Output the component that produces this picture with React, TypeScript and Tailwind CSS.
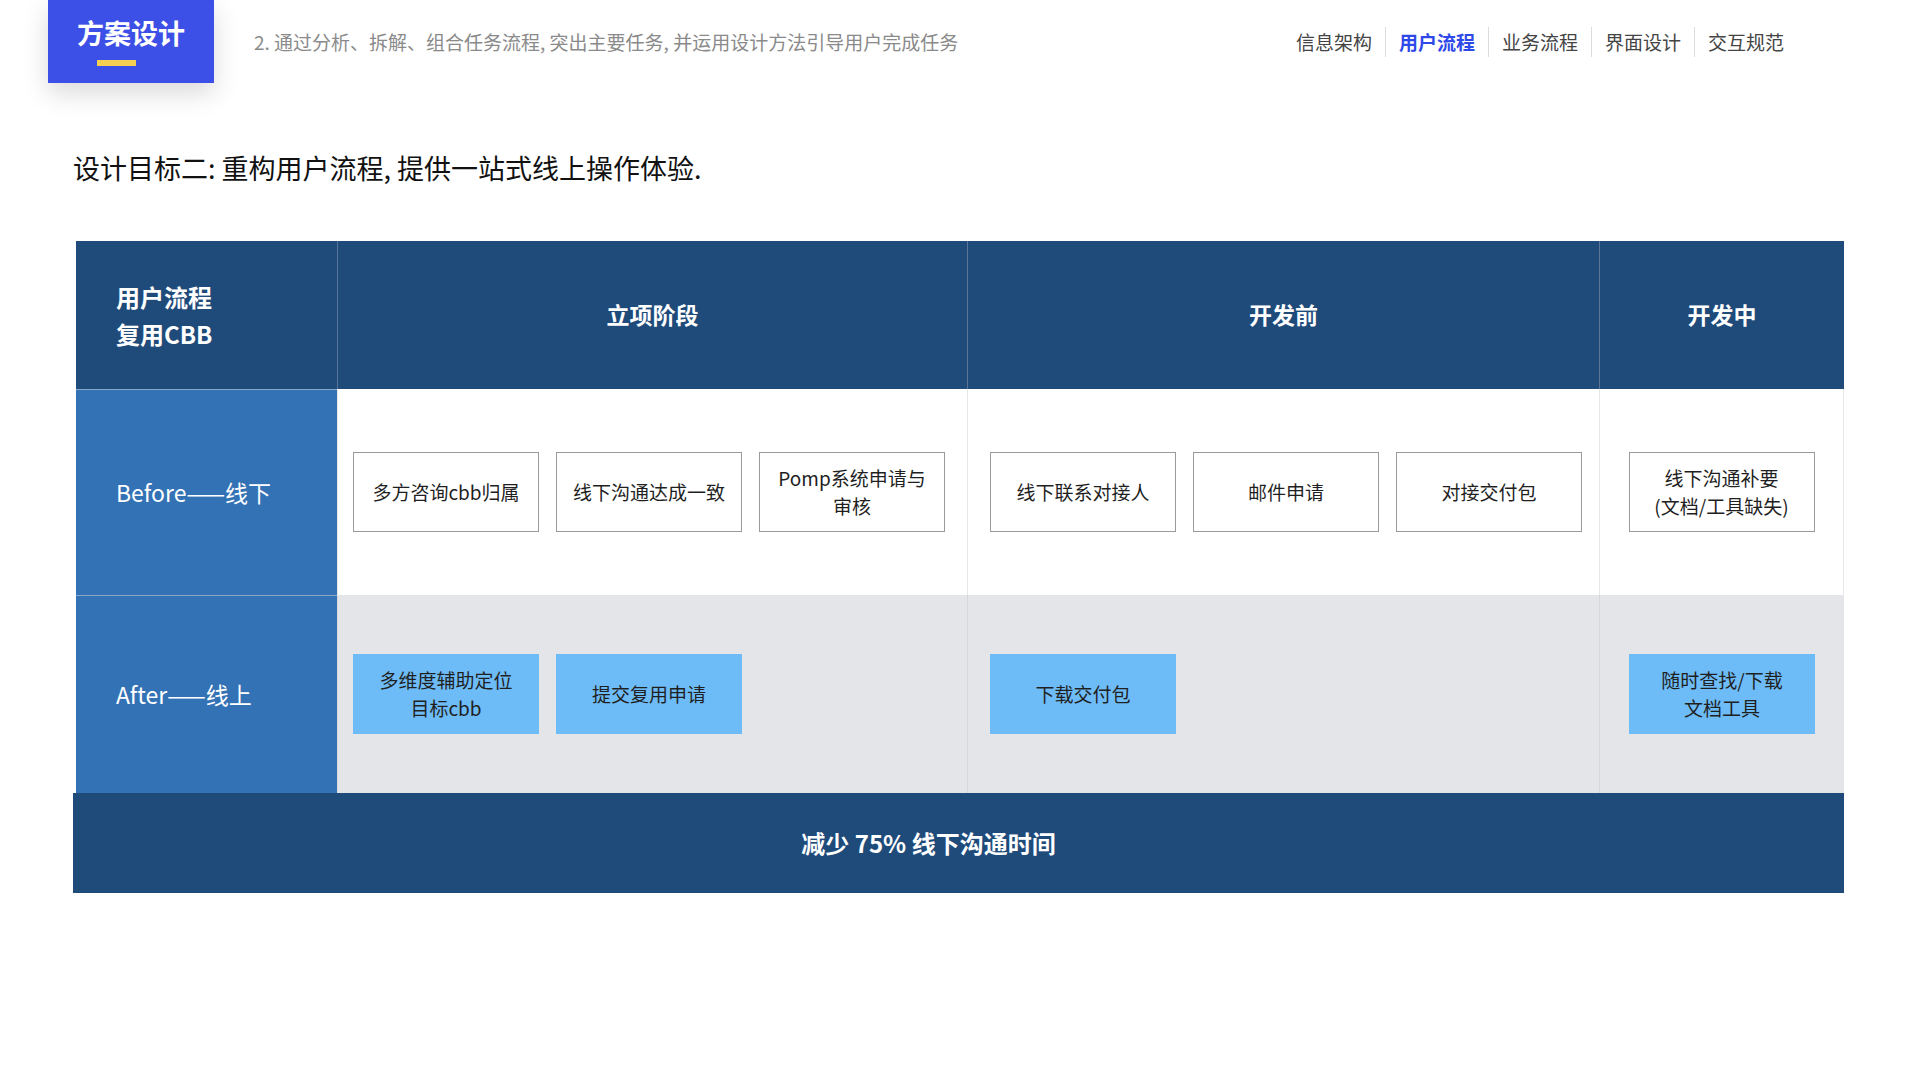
import React from "react";

const font = { fontFamily: '"PingFang SC","Noto Sans CJK SC","Noto Sans",sans-serif' };

function Box({ children, blue }: { children: React.ReactNode; blue?: boolean }) {
  return (
    <div
      className={`w-[186px] h-[80px] flex items-center justify-center text-center text-[19px] leading-[28px] text-[#1f1f1f] ${
        blue ? "bg-[#6ebcf7]" : "bg-white border border-[#9a9a9a]"
      }`}
    >
      <div>{children}</div>
    </div>
  );
}

export default function App() {
  const nav = ["信息架构", "用户流程", "业务流程", "界面设计", "交互规范"];
  return (
    <div className="w-[1920px] h-[1080px] bg-white relative" style={font}>
      {/* Top bar */}
      <div className="flex items-start">
        <div className="ml-[48px] w-[166px] h-[83px] bg-[#3c4fe6] flex flex-col items-center justify-center shadow-[0_10px_24px_rgba(0,0,0,0.15)]">
          <div className="text-white text-[27px] font-bold leading-none mt-[2px]">方案设计</div>
          <div className="w-[39px] h-[6px] bg-[#f5cf52] mt-[14px] -ml-[30px]" />
        </div>
        <div className="ml-[40px] mt-[28px] text-[19px] text-[#8a8a8a]">
          2. 通过分析、拆解、组合任务流程, 突出主要任务, 并运用设计方法引导用户完成任务
        </div>
        <div className="ml-auto mr-[136px] mt-[27px] flex items-center text-[19px]">
          {nav.map((n, i) => (
            <React.Fragment key={n}>
              {i > 0 && <div className="w-px h-[30px] bg-[#dcdcdc] mx-[13px]" />}
              <span className={i === 1 ? "text-[#2f49e8] font-bold" : "text-[#444]"}>{n}</span>
            </React.Fragment>
          ))}
        </div>
      </div>

      <div className="ml-[73px] mt-[65px] text-[27px] text-[#111]">
        设计目标二: 重构用户流程, 提供一站式线上操作体验.
      </div>

      {/* Table */}
      <div className="ml-[73px] mt-[52px] w-[1771px]">
        <div className="ml-[3px] grid grid-cols-[261px_630px_632px_245px]">
          {/* header */}
          <div className="h-[148px] bg-[#1f4b7b] flex flex-col justify-center pl-[40px] text-white text-[24px] font-bold leading-[37px]">
            <div>用户流程</div>
            <div>复用CBB</div>
          </div>
          {["立项阶段", "开发前", "开发中"].map((t) => (
            <div key={t} className="h-[148px] bg-[#1f4b7b] border-l border-[#5a7597] flex items-center justify-center text-white text-[23px] font-bold">
              {t}
            </div>
          ))}
          {/* before */}
          <div className="h-[206px] bg-[#3372b5] border-t border-[#8aa6c8] flex items-center pl-[40px] text-white text-[23px]">
            Before——线下
          </div>
          <div className="h-[206px] border-l border-[#e6e6e6] flex items-center gap-[17px] pl-[15px]">
            <Box>多方咨询cbb归属</Box>
            <Box>线下沟通达成一致</Box>
            <Box>Pomp系统申请与<br />审核</Box>
          </div>
          <div className="h-[206px] border-l border-[#e6e6e6] flex items-center gap-[17px] pl-[22px]">
            <Box>线下联系对接人</Box>
            <Box>邮件申请</Box>
            <Box>对接交付包</Box>
          </div>
          <div className="h-[206px] border-l border-r border-[#e6e6e6] flex items-center justify-center">
            <Box>线下沟通补要<br />(文档/工具缺失)</Box>
          </div>
          {/* after */}
          <div className="h-[198px] bg-[#3372b5] border-t border-[#8aa6c8] flex items-center pl-[40px] text-white text-[23px]">
            After——线上
          </div>
          <div className="h-[198px] bg-[#e3e5e9] border-l border-[#d6d8dc] flex items-center gap-[17px] pl-[15px]">
            <Box blue>多维度辅助定位<br />目标cbb</Box>
            <Box blue>提交复用申请</Box>
          </div>
          <div className="h-[198px] bg-[#e3e5e9] border-l border-[#d6d8dc] flex items-center pl-[22px]">
            <Box blue>下载交付包</Box>
          </div>
          <div className="h-[198px] bg-[#e3e5e9] border-l border-[#d6d8dc] flex items-center justify-center">
            <Box blue>随时查找/下载<br />文档工具</Box>
          </div>
        </div>
        <div className="h-[100px] bg-[#1f4b7b] flex items-center justify-center text-white text-[24px] font-bold pr-[60px]">
          减少 75% 线下沟通时间
        </div>
      </div>
    </div>
  );
}
